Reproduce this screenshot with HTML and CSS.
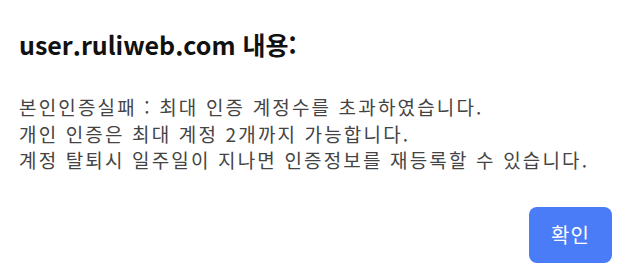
FILE: index.html
```html
<!DOCTYPE html>
<html lang="ko">
<head>
<meta charset="utf-8">
<link rel="stylesheet" href="styles.css">
</head>
<body>
<div class="dialog">
  <h1 class="title">user.ruliweb.com 내용:</h1>
  <div class="message">
    <p>본인인증실패 : 최대 인증 계정수를 초과하였습니다.</p>
    <p>개인 인증은 최대 계정 2개까지 가능합니다.</p>
    <p>계정 탈퇴시 일주일이 지나면 인증정보를 재등록할 수 있습니다.</p>
  </div>
  <div class="actions">
    <button class="ok">확인</button>
  </div>
</div>
</body>
</html>
```
FILE: styles.css
```css
html, body {
  margin: 0;
  padding: 0;
  background: #fff;
}
.dialog {
  width: 631px;
  height: 277px;
  box-sizing: border-box;
  padding: 26px 19px 0 19px;
  font-family: "Noto Sans CJK KR", "Noto Sans", sans-serif;
  display: flex;
  flex-direction: column;
}
.title {
  margin: 0;
  font-size: 25px;
  font-weight: 700;
  line-height: 36px;
  color: #111;
}
.message {
  margin-top: 32px;
  color: #444;
  font-size: 19px;
  letter-spacing: 2.15px;
  line-height: 26.5px;
}
.message p {
  margin: 0;
}
.actions {
  display: flex;
  justify-content: flex-end;
  margin-top: 33px;
}
.ok {
  width: 83px;
  height: 56px;
  border: none;
  border-radius: 8px;
  background: #4a7cf7;
  color: #fff;
  font-family: "Noto Sans CJK KR", sans-serif;
  font-size: 20px;
  letter-spacing: 1px;
}
```
